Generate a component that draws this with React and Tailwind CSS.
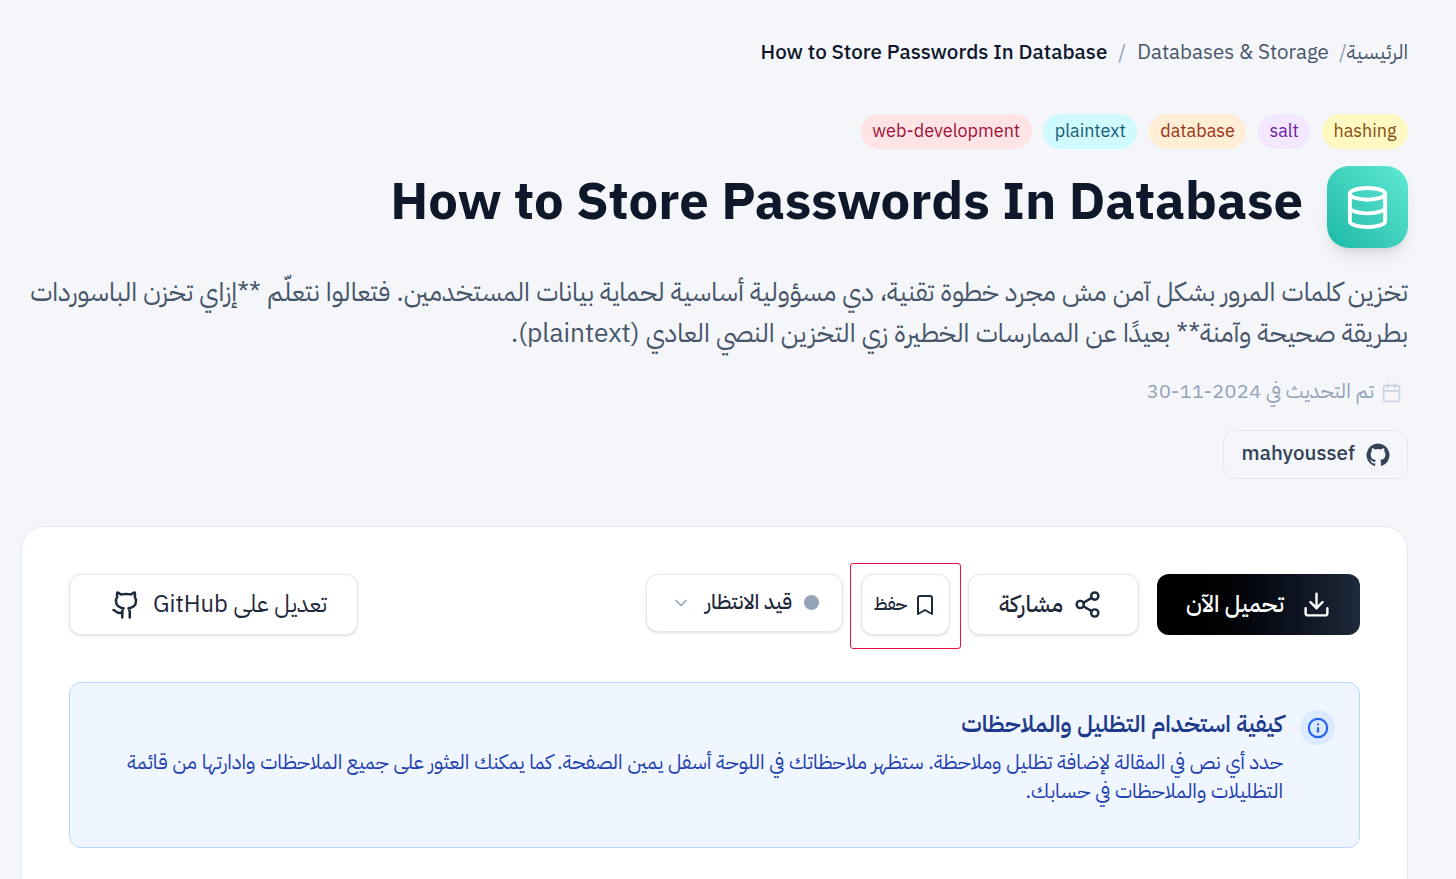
import React from "react";
import { Database, Calendar, Github, Download, Share2, Bookmark, ChevronDown, Info } from "lucide-react";

const chips = [
  ["hashing", "bg-[#fef9c3] text-[#854d0e]"],
  ["salt", "bg-[#f3e8ff] text-[#6b21a8]"],
  ["database", "bg-[#ffedd5] text-[#9a3412]"],
  ["plaintext", "bg-[#cffafe] text-[#155e75]"],
  ["web-development", "bg-[#ffe4e6] text-[#9f1239]"],
];

export default function App() {
  return (
    <div dir="rtl" className="h-[879px] overflow-hidden bg-[#f4f6fa] pl-[21px] pr-[48px] pt-[41px] font-['IBM_Plex_Sans_Arabic','Inter','Noto_Sans','DejaVu_Sans',sans-serif] text-[#1e293b]">
      <nav className="flex h-[24px] items-center text-[20.5px] leading-[24px]">
        <span className="text-[#475569]">الرئيسية</span>
        <span className="text-[#94a3b8]">/</span>
        <span className="mr-[10px] text-[#475569]" dir="ltr">Databases &amp; Storage</span>
        <span className="mx-[11px] text-[#94a3b8]">/</span>
        <span className="font-medium text-[#0f172a]" dir="ltr">How to Store Passwords In Database</span>
      </nav>

      <div className="mt-[49px] flex gap-[11.5px]">
        {chips.map(([t, c]) => (
          <span key={t} dir="ltr" className={`flex h-[35px] items-center rounded-full px-[11.5px] pb-[2px] text-[18px] ${c}`}>{t}</span>
        ))}
      </div>

      <div className="mt-[17px] flex items-center gap-[24px]">
        <div className="flex h-[82px] w-[81px] items-center justify-center rounded-[22px] bg-gradient-to-bl from-[#5eead4] to-[#14b8a6] shadow-lg">
          <Database size={47} strokeWidth={2} color="#fff" />
        </div>
        <h1 dir="ltr" className="mb-[10px] text-[52.6px] font-bold leading-[60px] text-[#0f172a]">How to Store Passwords In Database</h1>
      </div>

      <p className="mt-[24px] text-[26.3px] leading-[41px] text-[#475569]">
        تخزين كلمات المرور بشكل آمن مش مجرد خطوة تقنية، دي مسؤولية أساسية لحماية بيانات المستخدمين. فتعالوا نتعلّم **إزاي تخزن الباسوردات بطريقة صحيحة وآمنة** بعيدًا عن الممارسات الخطيرة زي التخزين النصي العادي (plaintext).
      </p>

      <div className="mt-[24px] flex h-[28px] items-center gap-[7px] pr-[6px] text-[20.5px] text-[#94a3b8]">
        <Calendar size={21} color="#cbd5e1" />
        <span>تم التحديث في <bdi dir="ltr">30-11-2024</bdi></span>
      </div>

      <a className="mt-[24px] flex h-[49px] w-[185px] items-center gap-[11px] rounded-[12px] border border-[#e2e8f0] pl-[17px] pr-[17px] text-[20.5px] font-medium text-[#334155]">
        <svg viewBox="0 0 24 24" width="24" height="24" fill="#334155"><path d="M12 .5a11.5 11.5 0 0 0-3.64 22.41c.58.1.79-.25.79-.56v-2c-3.2.7-3.88-1.54-3.88-1.54-.52-1.33-1.28-1.69-1.28-1.69-1.05-.72.08-.7.08-.7 1.16.08 1.77 1.19 1.77 1.19 1.03 1.76 2.7 1.25 3.36.96.1-.75.4-1.25.73-1.54-2.55-.29-5.24-1.28-5.24-5.69 0-1.26.45-2.28 1.19-3.09-.12-.29-.52-1.46.11-3.05 0 0 .97-.31 3.17 1.18a11 11 0 0 1 5.78 0c2.2-1.49 3.17-1.18 3.17-1.18.63 1.59.23 2.76.11 3.05.74.81 1.19 1.83 1.19 3.09 0 4.42-2.69 5.39-5.26 5.68.41.36.78 1.06.78 2.13v3.16c0 .31.21.67.8.56A11.5 11.5 0 0 0 12 .5z" /></svg>
        <span dir="ltr">mahyoussef</span>
      </a>

      <section className="mt-[47px] h-[500px] rounded-[24px] border border-[#e2e8f0] bg-white px-[47px] pt-[47px]">
        <div className="flex h-[61px] items-start">
          <button className="flex h-[61px] w-[203px] items-center justify-center gap-[18px] rounded-[12px] bg-gradient-to-l from-[#1e293b] to-[#000000] text-[23.4px] font-medium text-white">
            <Download size={29} />
            <span>تحميل الآن</span>
          </button>
          <button className="mr-[18px] flex h-[61px] w-[171px] items-center justify-center gap-[10px] rounded-[12px] border border-[#e2e8f0] bg-white pr-[6px] text-[23.4px] font-medium text-[#1e293b] shadow-sm">
            <Share2 size={29} />
            <span>مشاركة</span>
          </button>
          <div className="-mt-[11px] mr-[7px] rounded-[3px] border border-[#e8113f] pb-[13px] pl-[10px] pr-[10px] pt-[10px]">
            <button className="flex h-[61px] w-[89px] items-center justify-center gap-[6px] rounded-[12px] border border-[#e2e8f0] bg-white text-[17.6px] font-medium text-[#1e293b] shadow-sm">
              <Bookmark size={24} />
              <span>حفظ</span>
            </button>
          </div>
          <button className="mr-[7px] flex h-[58px] w-[197px] items-center justify-between rounded-[12px] border border-[#e2e8f0] bg-white pl-[24px] pr-[23px] text-[20.7px] font-medium text-[#1e293b] shadow-sm">
            <span className="flex items-center gap-[12px]">
              <span className="h-[15px] w-[15px] rounded-full bg-[#94a3b8]" />
              <span>قيد الانتظار</span>
            </span>
            <ChevronDown size={20} color="#94a3b8" />
          </button>
          <button className="mr-auto flex h-[61px] w-[289px] items-center justify-center gap-[12px] rounded-[12px] border border-[#e2e8f0] bg-white pl-[11px] text-[23.8px] text-[#1e293b] shadow-sm">
            <span>تعديل على GitHub</span>
            <Github size={30} />
          </button>
        </div>

        <div className="mt-[47px] flex h-[166px] items-start gap-[17px] rounded-[12px] border border-[#b6d6fb] bg-[#eff6ff] px-[24px] pt-[24px]">
          <div className="mt-[3px] flex h-[35px] w-[35px] shrink-0 items-center justify-center rounded-full bg-[#dbeafe]">
            <Info size={22} strokeWidth={2.4} color="#2563eb" />
          </div>
          <div className="pt-[1px]">
            <h3 className="text-[23.4px] font-semibold leading-[34px] text-[#1e3a8a]">كيفية استخدام التظليل والملاحظات</h3>
            <p className="mt-[6px] text-[20.45px] leading-[29px] text-[#1e40af]">
              حدد أي نص في المقالة لإضافة تظليل وملاحظة. ستظهر ملاحظاتك في اللوحة أسفل يمين الصفحة. كما يمكنك العثور على جميع الملاحظات وادارتها من قائمة التظليلات والملاحظات في حسابك.
            </p>
          </div>
        </div>
      </section>
    </div>
  );
}
